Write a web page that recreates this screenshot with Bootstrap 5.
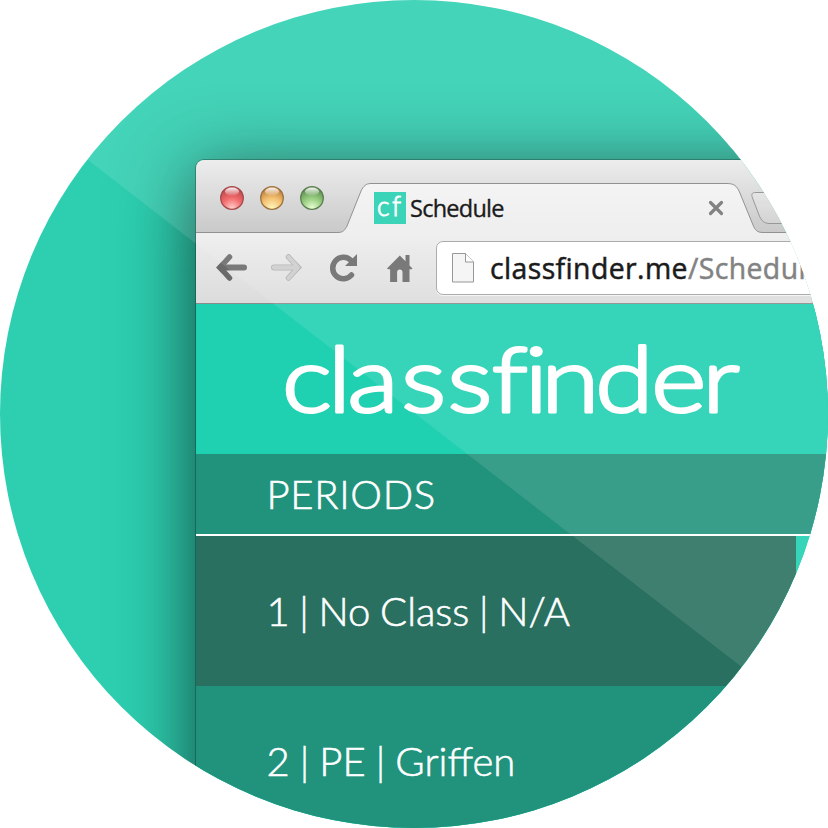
<!DOCTYPE html>
<html lang="en">
<head>
<meta charset="utf-8">
<meta name="viewport" content="width=device-width, initial-scale=1">
<title>classfinder</title>
<link href="https://cdn.jsdelivr.net/npm/bootstrap@5.3.0/dist/css/bootstrap.min.css" rel="stylesheet">
<style>
body{background:#fff}
.scene{width:828px;height:828px;background:#2ecfb1;clip-path:circle(414px at 414px 414px);padding:160px 0 0 196px}
.browser{width:760px;height:800px;border-radius:8px 8px 0 0;box-shadow:0 0 0 1px rgba(10,80,65,.55),0 18px 80px rgba(20,60,50,.72),0 4px 54px rgba(20,60,50,.34)}
.titlebar{height:73px;background:linear-gradient(#ebebeb,#c3c3c3);border-radius:8px 8px 0 0;padding-left:24px}
.tab-shape{left:0;top:0}
.lights{gap:16px;margin-top:2px}
.light{width:24px;height:24px}
.tab{margin-left:50px;width:350px;height:32px;margin-top:32px}
.favicon{width:32px;height:32px;background:#26cfb0}
.tab-title{font:23.5px/30px "Open Sans","Noto Sans",sans-serif;letter-spacing:-.75px;color:#000;margin-left:4px;-webkit-text-stroke:.35px #000}
.toolbar{height:71px;background:linear-gradient(#ededed,#dcdcdc);border-bottom:1px solid #8b8b8b;padding-left:18px}
.home{margin-left:13px}
.address{height:54px;width:480px;margin-left:23px;background:#fff;border:1px solid #a3a3a3;border-radius:7px;padding-left:14px;box-shadow:0 1px 0 #f4f4f4}
.url{font:28.4px/50px "Open Sans","Noto Sans",sans-serif;color:#000;margin-left:13px;margin-top:-1px;white-space:nowrap;-webkit-text-stroke:.5px;letter-spacing:.4px}
.url b{font-weight:400;color:#747474}
.brand{height:150px;background:#1fd0b1}
.strip,.period{color:#fff;font-family:Lato,sans-serif;font-weight:300;font-size:40px;padding-left:70.5px;white-space:pre;-webkit-text-stroke:.6px #fff}
.strip{height:82px;background:#21927c;border-bottom:2px solid #fff;letter-spacing:.7px}
.period{width:600px;height:150px;background:#297060;word-spacing:-1.2px}
.period.alt{width:auto;background:#21927c;word-spacing:-.8px}
.page{background:#1fd0b1}
.glare{inset:0;background:rgba(255,255,255,.107);clip-path:polygon(0 0,100% 0,100% 734px,88px 160px,0 92px);pointer-events:none}
</style>
</head>
<body class="overflow-hidden">
<main class="scene position-relative overflow-hidden">
  <section class="browser">
    <header class="titlebar position-relative d-flex align-items-start">
      <svg class="tab-shape position-absolute" width="760" height="73">
        <defs>
          <linearGradient id="tg" x2="0" y2="1"><stop stop-color="#f3f3f3"/><stop offset="1" stop-color="#ededed"/></linearGradient>
          <linearGradient id="ng" x2="0" y2="1"><stop stop-color="#e2e2e2"/><stop offset="1" stop-color="#cfcfcf"/></linearGradient>
        </defs>
        <path d="M0 72.5H142C147 72.5 149 70 151 66L165 31C167.500 26 170 23.500 175 23.500H531C538 23.500 541 26 543.500 32L557 65C559 70 561 72.500 567 72.500H760V75H0z" fill="url(#tg)" stroke="#858585"/>
        <path d="M640 32.500H560C556 32.500 555 34 556.500 38L563 55C565.500 61 568 63.500 574 63.500H640z" fill="url(#ng)" stroke="#8c8c8c"/>
      </svg>
      <div class="lights d-flex position-relative pt-4">
        <svg class="light" viewBox="0 0 24 24"><defs>
          <radialGradient id="r" cy=".95" r=".9"><stop stop-color="#ffc9c6"/><stop offset=".5" stop-color="#f15b5b"/><stop offset="1" stop-color="#b52f34"/></radialGradient>
          <radialGradient id="y" cy=".95" r=".9"><stop stop-color="#fff6b8"/><stop offset=".5" stop-color="#f2bb62"/><stop offset="1" stop-color="#b36c22"/></radialGradient>
          <radialGradient id="g" cy=".95" r=".9"><stop stop-color="#e9ffd0"/><stop offset=".5" stop-color="#8cc873"/><stop offset="1" stop-color="#467d35"/></radialGradient>
          <linearGradient id="hl" x2="0" y2="1"><stop stop-color="#fff" stop-opacity=".95"/><stop offset="1" stop-color="#fff" stop-opacity=".08"/></linearGradient></defs>
          <circle cx="12" cy="12" r="11.300" fill="url(#r)" stroke="#9a3538" stroke-width="1.300"/><ellipse cx="12" cy="5.500" rx="7" ry="4" fill="url(#hl)"/></svg>
        <svg class="light" viewBox="0 0 24 24"><circle cx="12" cy="12" r="11.300" fill="url(#y)" stroke="#936026" stroke-width="1.300"/><ellipse cx="12" cy="5.500" rx="7" ry="4" fill="url(#hl)"/></svg>
        <svg class="light" viewBox="0 0 24 24"><circle cx="12" cy="12" r="11.300" fill="url(#g)" stroke="#486f3a" stroke-width="1.300"/><ellipse cx="12" cy="5.500" rx="7" ry="4" fill="url(#hl)"/></svg>
      </div>
      <div class="tab d-flex align-items-center position-relative">
        <svg class="favicon flex-shrink-0" viewBox="0 0 32 32"><text x="3 18" y="24" font-family="Lato" font-weight="300" font-size="26.500" fill="#fff" stroke="#fff" stroke-width=".9">cf</text></svg>
        <span class="tab-title">Schedule</span>
        <svg class="ms-auto" width="16" height="16" viewBox="0 0 16 16"><path d="M2.500 2.500l11 11m0-11l-11 11" stroke="#747474" stroke-width="3.200" stroke-linecap="round"/></svg>
      </div>
    </header>
    <nav class="toolbar d-flex align-items-center">
      <svg class="flex-shrink-0" width="160" height="36" viewBox="214 250 160 36" fill="none" stroke-linecap="round" stroke-linejoin="round">
        <g stroke="#6a6a6a" stroke-width="6"><path d="M244 267.500H222"/><path d="M229.500 257l-9.500 10.500 9.500 10.500" stroke-width="5.500"/></g>
        <path d="M216 267.500l6-6v12z" fill="#6a6a6a"/>
        <g stroke="#b0b0b0" stroke-width="6"><path d="M274 267.500h22"/><path d="M288.500 257l9.500 10.500-9.500 10.500" stroke-width="5.500"/></g>
        <path d="M302 267.500l-6-6v12z" fill="#b0b0b0"/>
        <g stroke="#cdcdcd" stroke-width="4.300"><path d="M274 267.500h22"/><path d="M288.500 257l9.500 10.500-9.500 10.500" stroke-width="3.800"/></g>
        <path d="M351.500 275A10.700 10.700 0 1 1 350.500 260" stroke="#6a6a6a" stroke-width="5.500"/>
        <path d="M357 254v12h-12z" fill="#6a6a6a"/>
      </svg>
      <svg class="home flex-shrink-0" width="26" height="28" viewBox="0 0 26 28"><path d="M0 14.500L12.800 1.500l5.700 5.800V1h4v10.500l3 3-1 .8h-2V28h-7V18.500q0-3-2.700-3t-2.700 3V28h-7V15.300h-2z" fill="#6a6a6a"/></svg>
      <div class="address d-flex align-items-center flex-shrink-0">
        <svg width="26" height="32" viewBox="0 0 26 32"><path d="M1.500 1.500h13l8 8.500v20h-21z" fill="#f4f4f4" stroke="#8c8c8c"/><path d="M14.500 1.500V10h8" fill="#fff" stroke="#8c8c8c"/></svg>
        <span class="url">classfinder.me<b>/Schedul</b></span>
      </div>
    </nav>
    <div class="page">
      <div class="brand">
        <svg class="d-block" width="632" height="150" viewBox="196 304 632 150">
          <text transform="scale(1.16 1)" y="412" x="243 282.500 299.500 346 385.700 424 452.200 466.500 513.200 561.500 605.500" font-family="Lato" font-size="91" font-weight="300" fill="#fff" stroke="#fff" stroke-width="3" stroke-linejoin="round">classfinder</text>
        </svg>
      </div>
      <div class="strip d-flex align-items-center">PERIODS</div>
      <div class="period d-flex align-items-center">1 | No Class | N/A</div>
      <div class="period alt d-flex align-items-center">2 | PE | Griffen</div>
    </div>
  </section>
  <div class="glare position-absolute"></div>
</main>
<script src="https://cdn.jsdelivr.net/npm/bootstrap@5.3.0/dist/js/bootstrap.bundle.min.js"></script>
</body>
</html>
